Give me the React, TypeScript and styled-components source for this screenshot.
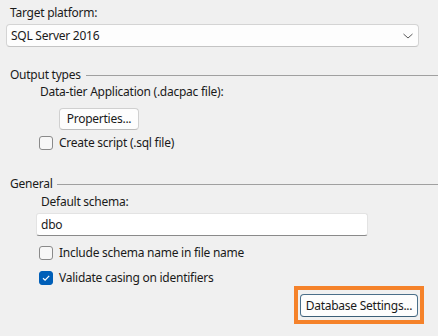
import React from "react";
import styled, { createGlobalStyle } from "styled-components";

const Global = createGlobalStyle`
  html, body { margin: 0; padding: 0; background: #f0f0f0; }
  * { box-sizing: border-box; }
`;

const Page = styled.div`
  width: 438px;
  height: 336px;
  background: #f0f0f0;
  font-family: "Noto Sans", "Segoe UI", sans-serif;
  font-size: 12px;
  letter-spacing: -0.25px;
  color: #1a1a1a;
  display: flex;
  flex-direction: column;
  overflow: hidden;
`;

const Label = styled.div<{ $indent: number; $top: number }>`
  line-height: 16px;
  height: 16px;
  padding-left: ${(p) => p.$indent}px;
  margin-top: ${(p) => p.$top}px;
  white-space: nowrap;
`;

const Select = styled.div`
  margin: 3px 19px 0 6px;
  height: 23px;
  background: #fdfdfd;
  border: 1px solid #d4d4d4;
  border-bottom-color: #c4c4c4;
  border-radius: 4px;
  display: flex;
  align-items: center;
  justify-content: space-between;
  padding: 0 4px 0 4px;
  line-height: 16px;
`;

const GroupHeader = styled.div<{ $top: number }>`
  display: flex;
  align-items: center;
  gap: 5px;
  margin-top: ${(p) => p.$top}px;
  padding-left: 10px;
  line-height: 16px;
  height: 16px;
`;

const Rule = styled.div`
  flex: 1;
  height: 1px;
  background: #a0a0a0;
  margin-top: 1px;
`;

const Button = styled.button`
  font: inherit;
  letter-spacing: inherit;
  color: #1a1a1a;
  height: 22px;
  padding: 0;
  white-space: nowrap;
  background: #fdfdfd;
  border: 1px solid #d0d0d0;
  border-bottom-color: #bcbcbc;
  border-radius: 4px;
  line-height: 16px;
  display: inline-flex;
  align-items: center;
  justify-content: center;
`;

const PropsButton = styled(Button)`
  align-self: flex-start;
  margin: 8px 0 0 59px;
  width: 80px;
`;

const CheckRow = styled.label<{ $top: number }>`
  display: flex;
  align-items: center;
  gap: 6px;
  margin-top: ${(p) => p.$top}px;
  padding-left: 39px;
  height: 16px;
  line-height: 16px;
  white-space: nowrap;
`;

const Box = styled.span<{ $checked?: boolean }>`
  width: 14px;
  height: 14px;
  border-radius: 3px;
  border: 1px solid ${(p) => (p.$checked ? "#005fb8" : "#8a8a8a")};
  background: ${(p) => (p.$checked ? "#005fb8" : "#f7f7f7")};
  display: inline-flex;
  align-items: center;
  justify-content: center;
  flex: none;
`;

const TextInput = styled.div`
  margin: 3px 0 0 36px;
  width: 332px;
  height: 23px;
  background: #ffffff;
  border: 1px solid #e3e3e3;
  border-bottom-color: #8a8a8a;
  border-radius: 3px;
  padding: 0 4px;
  display: flex;
  align-items: center;
  line-height: 16px;
`;

const Footer = styled.div`
  display: flex;
  justify-content: flex-end;
  margin-top: 0px;
  padding-right: 14px;
`;

const Highlight = styled.div`
  border: 4px solid #f5822a;
  padding: 4px 2px 3px 2px;
  display: flex;
`;

const DbButton = styled(Button)`
  height: 23px;
  width: 118px;
  border-color: #4a6f8a;
  border-bottom-color: #3c5f78;
`;

const Chevron = () => (
  <svg width="12" height="8" viewBox="0 0 12 8">
    <path d="M1.5 2 L6 6 L10.5 2" fill="none" stroke="#5a5a5a" strokeWidth="1" />
  </svg>
);

const Check = () => (
  <svg width="10" height="10" viewBox="0 0 10 10">
    <path d="M2 5.2 L4.1 7.2 L8.2 2.8" fill="none" stroke="#ffffff" strokeWidth="1.2" />
  </svg>
);

export default function App() {
  return (
    <>
      <Global />
      <Page>
        <Label $indent={10} $top={5}>Target platform:</Label>
        <Select>
          <span>SQL Server 2016</span>
          <Chevron />
        </Select>

        <GroupHeader $top={20}>
          <span>Output types</span>
          <Rule />
        </GroupHeader>
        <Label $indent={40} $top={1}>Data-tier Application (.dacpac file):</Label>
        <PropsButton>Properties...</PropsButton>
        <CheckRow $top={5}>
          <Box />
          <span>Create script (.sql file)</span>
        </CheckRow>

        <GroupHeader $top={25}>
          <span>General</span>
          <Rule />
        </GroupHeader>
        <Label $indent={41} $top={2}>Default schema:</Label>
        <TextInput>dbo</TextInput>
        <CheckRow $top={9}>
          <Box />
          <span>Include schema name in file name</span>
        </CheckRow>
        <CheckRow $top={9}>
          <Box $checked>
            <Check />
          </Box>
          <span>Validate casing on identifiers</span>
        </CheckRow>

        <Footer>
          <Highlight>
            <DbButton>Database Settings...</DbButton>
          </Highlight>
        </Footer>
      </Page>
    </>
  );
}
